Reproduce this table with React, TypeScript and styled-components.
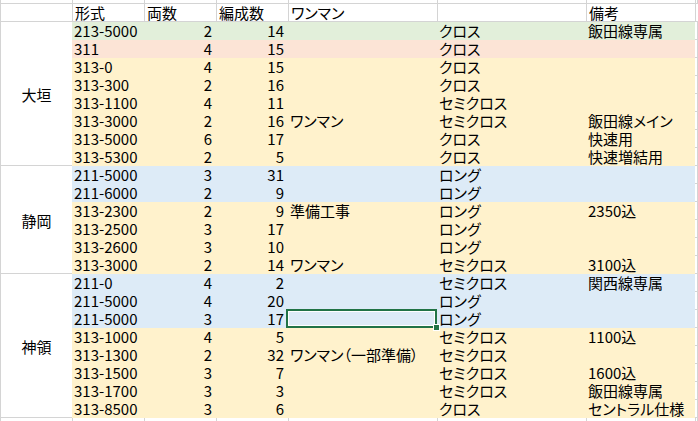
import styled, { createGlobalStyle } from "styled-components";

type Fill = "green" | "pink" | "yellow" | "blue";

type Row = {
  fill: Fill;
  type: string;
  cars: number;
  sets: number;
  oneman?: string;
  seat: string;
  note?: string;
  selected?: boolean;
};

type Group = { name: string; rows: Row[] };

const GRID = "#d4d4d4";
const COLS = "72px 72px 72px 149px 149px 109px 1fr";

const fills: Record<Fill, string> = {
  green: "#e2efda",
  pink: "#fce4d6",
  yellow: "#fff2cc",
  blue: "#ddebf7",
};

const groups: Group[] = [
  {
    name: "大垣",
    rows: [
      { fill: "green", type: "213-5000", cars: 2, sets: 14, seat: "クロス", note: "飯田線専属" },
      { fill: "pink", type: "311", cars: 4, sets: 15, seat: "クロス" },
      { fill: "yellow", type: "313-0", cars: 4, sets: 15, seat: "クロス" },
      { fill: "yellow", type: "313-300", cars: 2, sets: 16, seat: "クロス" },
      { fill: "yellow", type: "313-1100", cars: 4, sets: 11, seat: "セミクロス" },
      { fill: "yellow", type: "313-3000", cars: 2, sets: 16, oneman: "ワンマン", seat: "セミクロス", note: "飯田線メイン" },
      { fill: "yellow", type: "313-5000", cars: 6, sets: 17, seat: "クロス", note: "快速用" },
      { fill: "yellow", type: "313-5300", cars: 2, sets: 5, seat: "クロス", note: "快速増結用" },
    ],
  },
  {
    name: "静岡",
    rows: [
      { fill: "blue", type: "211-5000", cars: 3, sets: 31, seat: "ロング" },
      { fill: "blue", type: "211-6000", cars: 2, sets: 9, seat: "ロング" },
      { fill: "yellow", type: "313-2300", cars: 2, sets: 9, oneman: "準備工事", seat: "ロング", note: "2350込" },
      { fill: "yellow", type: "313-2500", cars: 3, sets: 17, seat: "ロング" },
      { fill: "yellow", type: "313-2600", cars: 3, sets: 10, seat: "ロング" },
      { fill: "yellow", type: "313-3000", cars: 2, sets: 14, oneman: "ワンマン", seat: "セミクロス", note: "3100込" },
    ],
  },
  {
    name: "神領",
    rows: [
      { fill: "blue", type: "211-0", cars: 4, sets: 2, seat: "セミクロス", note: "関西線専属" },
      { fill: "blue", type: "211-5000", cars: 4, sets: 20, seat: "ロング" },
      { fill: "blue", type: "211-5000", cars: 3, sets: 17, seat: "ロング", selected: true },
      { fill: "yellow", type: "313-1000", cars: 4, sets: 5, seat: "セミクロス", note: "1100込" },
      { fill: "yellow", type: "313-1300", cars: 2, sets: 32, oneman: "ワンマン（一部準備）", seat: "セミクロス" },
      { fill: "yellow", type: "313-1500", cars: 3, sets: 7, seat: "セミクロス", note: "1600込" },
      { fill: "yellow", type: "313-1700", cars: 3, sets: 3, seat: "セミクロス", note: "飯田線専属" },
      { fill: "yellow", type: "313-8500", cars: 3, sets: 6, seat: "クロス", note: "セントラル仕様" },
    ],
  },
];

const GlobalStyle = createGlobalStyle`
  html, body {
    margin: 0;
    padding: 0;
    background: #fff;
  }
  body {
    font-family: "Noto Sans CJK JP", "Noto Sans", sans-serif;
    font-feature-settings: "palt";
    color: #000;
  }
`;

const Sheet = styled.div`
  width: 698px;
  height: 421px;
  overflow: hidden;
  display: flex;
  flex-direction: column;
  border-left: 1px solid ${GRID};
  box-sizing: border-box;
`;

const StripRow = styled.div<{ $grow?: boolean }>`
  display: grid;
  grid-template-columns: 72px ${COLS};
  height: ${(p) => (p.$grow ? "auto" : "4px")};
  flex: ${(p) => (p.$grow ? 1 : "none")};
  div {
    border-right: 1px solid ${GRID};
    border-bottom: ${(p) => (p.$grow ? "none" : `1px solid ${GRID}`)};
    box-sizing: border-box;
  }
`;

const HeaderRow = styled.div`
  display: grid;
  grid-template-columns: 72px ${COLS};
  height: 18px;
`;

const HeadCell = styled.div`
  border-right: 1px solid ${GRID};
  border-bottom: 1px solid ${GRID};
  box-sizing: border-box;
  font-size: 15px;
  line-height: 17px;
  padding-left: 2px;
  white-space: nowrap;
`;

const Body = styled.div`
  display: flex;
`;

const GroupColumn = styled.div`
  width: 72px;
  display: flex;
  flex-direction: column;
`;

const GroupCell = styled.div<{ $rows: number }>`
  height: ${(p) => p.$rows * 18}px;
  border-bottom: 1px solid ${GRID};
  box-sizing: border-box;
  display: flex;
  align-items: center;
  justify-content: center;
  font-size: 15px;
  padding-top: 1px;
`;

const Rows = styled.div`
  flex: 1;
  display: flex;
  flex-direction: column;
`;

const DataRow = styled.div`
  display: grid;
  grid-template-columns: ${COLS};
  height: 18px;
`;

const Cell = styled.div<{ $fill?: Fill; $num?: boolean; $digits?: boolean; $selected?: boolean }>`
  position: relative;
  background: ${(p) => (p.$fill ? fills[p.$fill] : "#fff")};
  border-right: 1px solid ${(p) => (p.$fill ? "transparent" : GRID)};
  border-bottom: 1px solid ${(p) => (p.$fill ? "transparent" : GRID)};
  box-sizing: border-box;
  font-size: 15px;
  font-feature-settings: ${(p) => (p.$digits ? "normal" : '"palt"')};
  line-height: 17px;
  white-space: nowrap;
  text-align: ${(p) => (p.$num ? "right" : "left")};
  padding: ${(p) => (p.$num ? "0 3px 0 0" : "0 0 0 2px")};
  z-index: ${(p) => (p.$selected ? 2 : "auto")};

  ${(p) =>
    p.$selected &&
    `
    &::after {
      content: "";
      position: absolute;
      top: -1px;
      left: -2px;
      right: -1px;
      bottom: -1px;
      border: 2px solid #217346;
      box-shadow: inset 0 0 0 1px #fff;
    }
    &::before {
      content: "";
      position: absolute;
      right: -4px;
      bottom: -4px;
      width: 5px;
      height: 5px;
      background: #217346;
      border: 1px solid #fff;
      z-index: 3;
    }
  `}
`;

const headers = ["", "形式", "両数", "編成数", "ワンマン", "", "備考", ""];

export default function App() {
  return (
    <>
      <GlobalStyle />
      <Sheet>
        <StripRow>
          {headers.map((_, i) => (
            <div key={i} />
          ))}
        </StripRow>
        <HeaderRow>
          {headers.map((h, i) => (
            <HeadCell key={i}>{h}</HeadCell>
          ))}
        </HeaderRow>
        <Body>
          <GroupColumn>
            {groups.map((g) => (
              <GroupCell key={g.name} $rows={g.rows.length}>
                {g.name}
              </GroupCell>
            ))}
          </GroupColumn>
          <Rows>
            {groups.flatMap((g) =>
              g.rows.map((r, i) => (
                <DataRow key={g.name + i}>
                  <Cell $fill={r.fill} $digits>
                    {r.type}
                  </Cell>
                  <Cell $fill={r.fill} $num $digits>
                    {r.cars}
                  </Cell>
                  <Cell $fill={r.fill} $num $digits>
                    {r.sets}
                  </Cell>
                  <Cell $fill={r.fill} $selected={r.selected}>
                    {r.oneman}
                  </Cell>
                  <Cell $fill={r.fill}>{r.seat}</Cell>
                  <Cell $fill={r.fill}>{r.note}</Cell>
                  <Cell />
                </DataRow>
              ))
            )}
          </Rows>
        </Body>
        <StripRow $grow>
          {headers.map((_, i) => (
            <div key={i} />
          ))}
        </StripRow>
      </Sheet>
    </>
  );
}
